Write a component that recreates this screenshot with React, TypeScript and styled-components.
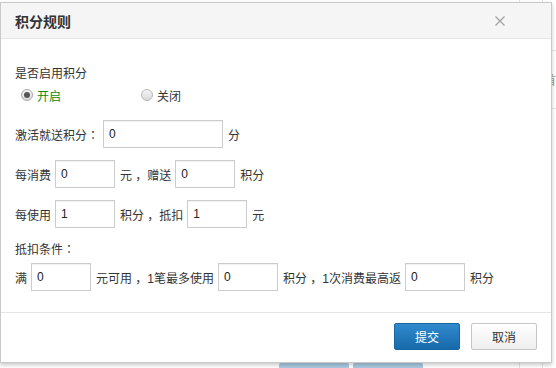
import React from "react";
import styled, { createGlobalStyle } from "styled-components";

const Global = createGlobalStyle`
  html, body { margin: 0; padding: 0; background: #fff; }
  body {
    font-family: "Liberation Sans", "Noto Sans CJK SC", sans-serif;
    font-size: 12px;
    color: #333;
  }
`;

const Stage = styled.div`
  position: relative;
  width: 556px;
  height: 368px;
  overflow: hidden;
`;

const BgPage = styled.div`
  display: flex;
  height: 368px;
`;

const BgMain = styled.div`
  width: 530px;
  border-right: 1px solid #e2e2e2;
  padding-top: 363px;
  box-sizing: border-box;
`;

const BgButtons = styled.div`
  display: flex;
  gap: 4px;
  padding-left: 279px;
`;

const BgButton = styled.div`
  width: 70px;
  height: 12px;
  background: #a9c9e2;
  border-radius: 2px;
`;

const BgSide = styled.div`
  flex: 1;
  padding-left: 22px;
`;

const BgSideCol = styled.div`
  height: 100%;
  border-left: 1px solid #e4e4e4;
  padding-top: 50px;
  box-sizing: border-box;
`;

const BgSideRow = styled.div`
  height: 57px;
  border-top: 1px solid #e4e4e4;
  border-bottom: 1px solid #e4e4e4;
  display: flex;
  align-items: center;
  color: #999;
  font-family: "Noto Sans CJK SC", sans-serif;
  font-size: 12px;
  padding-left: 1px;
`;

const Modal = styled.div`
  position: absolute;
  left: 0;
  top: 2px;
  width: 552px;
  height: 361px;
  box-sizing: border-box;
  border: 1px solid #c9c9c9;
  background: #fff;
  box-shadow: 0 2px 4px rgba(0, 0, 0, 0.22);
  display: flex;
  flex-direction: column;
`;

const Header = styled.div`
  height: 36px;
  box-sizing: border-box;
  background: #f5f5f5;
  border-bottom: 1px solid #e5e5e5;
  display: flex;
  align-items: center;
  justify-content: space-between;
  padding: 0 46px 0 14px;
`;

const Title = styled.div`
  font-family: "Noto Sans CJK SC", sans-serif;
  font-size: 14px;
  font-weight: bold;
  color: #333;
`;

const Close = styled.button`
  border: 0;
  padding: 0;
  background: none;
  width: 10px;
  height: 10px;
  display: flex;
  cursor: pointer;
`;

const Body = styled.div`
  flex: 1;
  padding: 25px 14px 0;
`;

const Line = styled.div<{ $mt?: number }>`
  line-height: 20px;
  height: 20px;
  margin-top: ${(p) => p.$mt ?? 0}px;
`;

const Colon = styled.span`
  font-family: "Noto Sans CJK TC", sans-serif;
`;

const RadioRow = styled.div`
  display: flex;
  height: 20px;
  margin-top: 1px;
`;

const RadioOption = styled.label`
  width: 120px;
  box-sizing: border-box;
  padding-left: 6px;
  display: flex;
  align-items: center;
  gap: 4px;
`;

const RadioDot = styled.span<{ $on?: boolean }>`
  width: 12px;
  height: 12px;
  box-sizing: border-box;
  border-radius: 50%;
  border: 1px solid ${(p) => (p.$on ? "#a6a6a6" : "#b8b8b8")};
  background: linear-gradient(#f6f6f6, #d9d9d9);
  display: flex;
  align-items: center;
  justify-content: center;
  &::after {
    content: "";
    width: 6px;
    height: 6px;
    border-radius: 50%;
    background: ${(p) => (p.$on ? "#555" : "transparent")};
  }
`;

const RadioText = styled.span<{ $on?: boolean }>`
  color: ${(p) => (p.$on ? "#0b8d0b" : "#333")};
`;

const FormRow = styled.div<{ $mt: number }>`
  display: flex;
  align-items: center;
  gap: 4px;
  margin-top: ${(p) => p.$mt}px;
  height: 28px;
  white-space: pre;
`;

const Input = styled.input<{ $w: number }>`
  width: ${(p) => p.$w}px;
  height: 28px;
  box-sizing: border-box;
  border: 1px solid #ccc;
  box-shadow: inset 0 1px 1px rgba(0, 0, 0, 0.06);
  padding: 0 5px;
  margin: 0 1px 0 0;
  font-family: "Liberation Sans", sans-serif;
  font-size: 12px;
  color: #222;
  outline: none;
`;

const Footer = styled.div`
  height: 50px;
  box-sizing: border-box;
  border-top: 1px solid #e5e5e5;
  padding: 10px 14px 12px;
  display: flex;
  justify-content: flex-end;
  gap: 11px;
`;

const Button = styled.button<{ $primary?: boolean }>`
  width: 66px;
  height: 27px;
  box-sizing: border-box;
  border-radius: 2px;
  font-family: "Noto Sans CJK SC", sans-serif;
  font-size: 12px;
  padding: 0;
  cursor: pointer;
  border: 1px solid ${(p) => (p.$primary ? "#1b659f" : "#c6c6c6")};
  color: ${(p) => (p.$primary ? "#fff" : "#333")};
  background: ${(p) =>
    p.$primary
      ? "linear-gradient(#2f8acd, #176aab)"
      : "linear-gradient(#ffffff, #eeeeee)"};
`;

export default function App() {
  return (
    <Stage>
      <Global />
      <BgPage>
        <BgMain>
          <BgButtons>
            <BgButton />
            <BgButton />
          </BgButtons>
        </BgMain>
        <BgSide>
          <BgSideCol>
            <BgSideRow>首</BgSideRow>
          </BgSideCol>
        </BgSide>
      </BgPage>
      <Modal>
        <Header>
          <Title>积分规则</Title>
          <Close aria-label="close">
            <svg width="10" height="10" viewBox="0 0 10 10">
              <path d="M0.5 0.5 L9.5 9.5 M9.5 0.5 L0.5 9.5" stroke="#a0a0a0" strokeWidth="1.2" fill="none" />
            </svg>
          </Close>
        </Header>
        <Body>
          <Line>是否启用积分</Line>
          <RadioRow>
            <RadioOption>
              <RadioDot $on />
              <RadioText $on>开启</RadioText>
            </RadioOption>
            <RadioOption>
              <RadioDot />
              <RadioText>关闭</RadioText>
            </RadioOption>
          </RadioRow>
          <FormRow $mt={15}>
            <span>
              激活就送积分<Colon>：</Colon>
            </span>
            <Input $w={120} defaultValue="0" />
            <span>分</span>
          </FormRow>
          <FormRow $mt={12}>
            <span>每消费</span>
            <Input $w={60} defaultValue="0" />
            <span>元 ，赠送</span>
            <Input $w={60} defaultValue="0" />
            <span>积分</span>
          </FormRow>
          <FormRow $mt={12}>
            <span>每使用</span>
            <Input $w={60} defaultValue="1" />
            <span>积分 ，抵扣</span>
            <Input $w={60} defaultValue="1" />
            <span>元</span>
          </FormRow>
          <Line $mt={11}>
            抵扣条件<Colon>：</Colon>
          </Line>
          <FormRow $mt={4}>
            <span>满</span>
            <Input $w={60} defaultValue="0" />
            <span>元可用 ，1笔最多使用</span>
            <Input $w={60} defaultValue="0" />
            <span>积分 ，1次消费最高返</span>
            <Input $w={60} defaultValue="0" />
            <span>积分</span>
          </FormRow>
        </Body>
        <Footer>
          <Button $primary>提交</Button>
          <Button>取消</Button>
        </Footer>
      </Modal>
    </Stage>
  );
}
